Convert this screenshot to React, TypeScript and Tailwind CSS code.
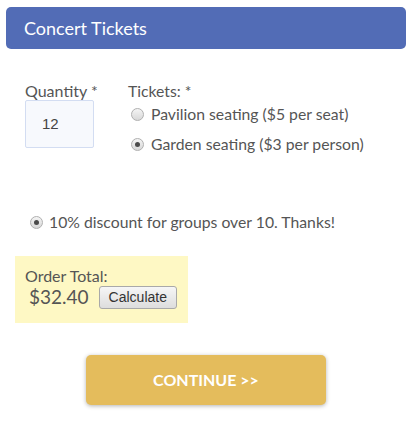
import React from 'react'

const Radio = ({ checked }: { checked?: boolean }) => (
  <span className="relative flex items-center justify-center w-[13px] h-[13px] rounded-full border border-[#b0b0b0] bg-gradient-to-b from-[#f4f4f4] to-[#d8d8d8] shrink-0">
    {checked && <span className="w-[5px] h-[5px] rounded-full bg-[#4a4a4a]" />}
  </span>
)

export default function App() {
  return (
    <div className="w-[412px] h-[421px] bg-white font-['Lato',sans-serif] text-[#555] text-[15.75px] leading-[18px]">
      {/* Header */}
      <div className="pt-[7px] px-[6px]">
        <div className="h-[42px] rounded-[5px] bg-[#526cb6] flex items-center pl-[18px] text-white text-[18px] leading-[22px]">
          Concert Tickets
        </div>
      </div>

      {/* Quantity + tickets */}
      <div className="flex mt-[33px] pl-[25px]">
        <div className="w-[103px]">
          <div className="text-[16px]">Quantity&nbsp;*</div>
          <div className="w-[69px] h-[48px] border border-[#d3ddf2] rounded-[2px] bg-[#f7f9fd] flex items-center pl-[16px] font-['Liberation_Sans',sans-serif] text-[15px] text-[#444]">
            12
          </div>
        </div>
        <div>
          <div>Tickets: *</div>
          <div className="mt-[5px] flex flex-col gap-[12px]">
            <label className="flex items-center pl-[3px] gap-[7px]">
              <Radio />
              <span>Pavilion seating ($5 per seat)</span>
            </label>
            <label className="flex items-center pl-[3px] gap-[7px]">
              <Radio checked />
              <span>Garden seating ($3 per person)</span>
            </label>
          </div>
        </div>
      </div>

      {/* Discount */}
      <div className="mt-[60px] pl-[30px] flex items-center gap-[6px]">
        <Radio checked />
        <span>10% discount for groups over 10. Thanks!</span>
      </div>

      {/* Order total */}
      <div className="mt-[25px] ml-[15px] w-[173px] bg-[#fef8c4] pt-[11px] pb-[14px] pl-[10px]">
        <div className="text-[16px]">Order Total:</div>
        <div className="flex items-center h-[24px] pl-[4px] gap-[10px]">
          <span className="text-[19px] leading-[24px]">$32.40</span>
          <button className="h-[23px] px-[9px] border border-[#a9a9a9] rounded-[3px] bg-gradient-to-b from-[#f6f6f6] to-[#dddddd] font-['Liberation_Sans',sans-serif] text-[14px] leading-[20px] text-[#333]">
            Calculate
          </button>
        </div>
      </div>

      {/* Continue */}
      <div className="mt-[32px] flex justify-center">
        <button className="w-[240px] h-[50px] rounded-[5px] bg-[#e4bc5c] text-white font-bold text-[16px] shadow-[0_1px_4px_rgba(0,0,0,0.3)]">
          CONTINUE &gt;&gt;
        </button>
      </div>
    </div>
  )
}
